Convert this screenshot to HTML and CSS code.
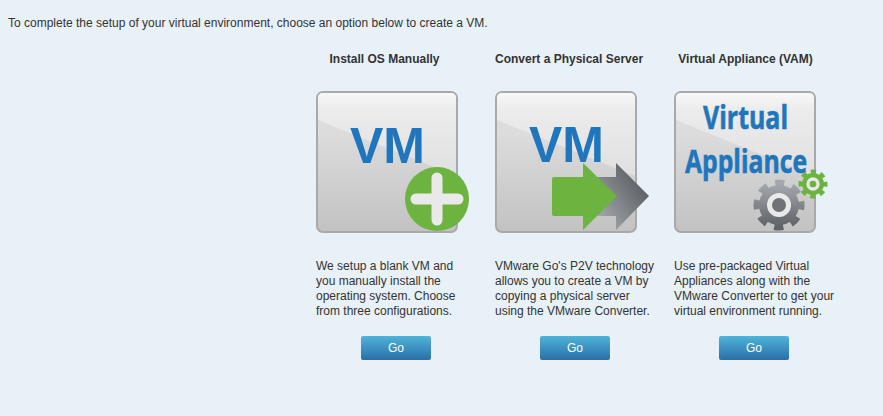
FILE: index.html
```html
<!DOCTYPE html>
<html lang="en">
<head>
  <meta charset="UTF-8" />
  <title>Create a VM</title>
  <meta name="viewport" content="width=device-width, initial-scale=1.0" />
  <link rel="stylesheet" href="styles.css">
</head>
<body>

<p class="intro">To complete the setup of your virtual environment, choose an option below to create a VM.</p>

<div class="options">
  <!-- Install OS -->
  <div class="option">
    <h3 class="option-title option-title-first">Install OS Manually</h3>
    <svg class="tile" viewBox="0 0 172 146" width="172" height="146">
      <defs>
        <linearGradient id="tileBg" x1="0" y1="0" x2="0" y2="1">
          <stop offset="0" stop-color="#dedede"/>
          <stop offset="0.3" stop-color="#dcdcdc"/>
          <stop offset="1" stop-color="#c2c2c2"/>
        </linearGradient>
        <linearGradient id="tileShine" x1="0" y1="0" x2="0" y2="1">
          <stop offset="0" stop-color="#f8f8f8"/>
          <stop offset="0.2" stop-color="#ececec"/>
          <stop offset="1" stop-color="#e0e0e0"/>
        </linearGradient>
        <linearGradient id="arrowGrey" x1="0" y1="1" x2="1" y2="0.2">
          <stop offset="0" stop-color="#b4b8bc"/>
          <stop offset="1" stop-color="#505359"/>
        </linearGradient>
        <linearGradient id="gearGrey" x1="0" y1="0" x2="0" y2="1">
          <stop offset="0" stop-color="#a4a8ae"/>
          <stop offset="1" stop-color="#606368"/>
        </linearGradient>
      </defs>
      <rect class="tile-box" x="1" y="1" width="140" height="140" rx="6" fill="url(#tileBg)"/>
      <path d="M2 7 Q2 2 7 2 H135 Q140 2 140 7 V85 L2 29 Z" fill="url(#tileShine)"/>
      <text class="tile-vm" x="34" y="72">VM</text>
      <circle cx="121" cy="108" r="32" fill="#6db33f"/>
      <path class="plus" d="M100 108 H142 M121 87 V129"/>
    </svg>
    <p class="option-text">We setup a blank VM and<br>you manually install the<br>operating system. Choose<br>from three configurations.</p>
    <a class="go" href="#">Go</a>
  </div>

  <!-- P2V -->
  <div class="option">
    <h3 class="option-title">Convert a Physical Server</h3>
    <svg class="tile" viewBox="0 0 172 146" width="172" height="146">
      <rect class="tile-box" x="1" y="1" width="140" height="140" rx="6" fill="url(#tileBg)"/>
      <path d="M2 7 Q2 2 7 2 H135 Q140 2 140 7 V85 L2 29 Z" fill="url(#tileShine)"/>
      <text class="tile-vm" x="34" y="71">VM</text>
      <path d="M96 86 H121 V72 L154 105 L121 139 V125 H96 Z" fill="url(#arrowGrey)"/>
      <path d="M59 86 H88 V72 L122 105 L88 139 V125 H59 Q57 125 57 123 V88 Q57 86 59 86 Z" fill="#6db33f"/>
    </svg>
    <p class="option-text">VMware Go's P2V technology<br>allows you to create a VM by<br>copying a physical server<br>using the VMware Converter.</p>
    <a class="go" href="#">Go</a>
  </div>

  <!-- Appliance -->
  <div class="option">
    <h3 class="option-title">Virtual Appliance (VAM)</h3>
    <svg class="tile" viewBox="0 0 172 146" width="172" height="146">
      <rect class="tile-box" x="1" y="1" width="140" height="140" rx="6" fill="url(#tileBg)"/>
      <path d="M2 7 Q2 2 7 2 H135 Q140 2 140 7 V85 L2 29 Z" fill="url(#tileShine)"/>
      <text class="tile-word" x="29" y="38" textLength="85" lengthAdjust="spacingAndGlyphs">Virtual</text>
      <text class="tile-word" x="11" y="82" textLength="122" lengthAdjust="spacingAndGlyphs">Appliance</text>
      <!-- big gear -->
      <circle cx="105" cy="114" r="20" fill="url(#gearGrey)"/>
      <circle cx="105" cy="114" r="21.5" fill="none" stroke="url(#gearGrey)" stroke-width="8" stroke-dasharray="9 7.89" stroke-dashoffset="4.5"/>
      <circle cx="105" cy="114" r="9.5" fill="#6f7277" stroke="#e9e9e9" stroke-width="5"/>
      <!-- small gear -->
      <circle cx="139" cy="93" r="11" fill="#6db33f"/>
      <circle cx="139" cy="93" r="12" fill="none" stroke="#6db33f" stroke-width="5" stroke-dasharray="5 4.42" stroke-dashoffset="2.5"/>
      <circle cx="139" cy="93" r="5" fill="#6db33f" stroke="#e9e9e9" stroke-width="3.3"/>
    </svg>
    <p class="option-text">Use pre-packaged Virtual<br>Appliances along with the<br>VMware Converter to get your<br>virtual environment running.</p>
    <a class="go" href="#">Go</a>
  </div>
</div>

</body>
</html>
```

FILE: styles.css
```css
body {
  font-family: 'Liberation Sans', Arial, sans-serif;
  font-size: 12px;
  line-height: 15px;
  margin: 0;
  padding: 16px 8px 0;
  background-color: #e8f0f8;
  color: #333;
}

.intro {
  margin: 0;
}

.options {
  display: flex;
  gap: 19px;
  margin-left: 308px;
  margin-top: 21px;
}

.option {
  width: 160px;
}

.option-title {
  width: 143px;
  margin: 0;
  font-size: 12px;
  font-weight: bold;
  text-align: center;
  white-space: nowrap;
}

.option-title-first {
  padding-right: 6px;
  box-sizing: border-box;
}

.tile {
  display: block;
  margin-top: 24px;
}

.tile-box {
  stroke: #a9a9a9;
  stroke-width: 2;
}

.tile-vm {
  font-family: 'Liberation Sans', Arial, sans-serif;
  font-size: 50px;
  font-weight: bold;
  fill: #1f76bc;
}

.tile-word {
  font-family: 'Open Sans', sans-serif;
  font-size: 32px;
  font-weight: bold;
  fill: #1f76bc;
  stroke: #1f76bc;
  stroke-width: 0.6;
}

.plus {
  fill: none;
  stroke: #e9e9e9;
  stroke-width: 11;
  stroke-linecap: round;
}

.option-text {
  margin: 22px 0 0;
  white-space: nowrap;
}

.go {
  display: block;
  width: 70px;
  height: 24px;
  margin: 17px auto 0;
  border-radius: 2px;
  background: linear-gradient(to bottom, #4fb4d8, #2a6fa9);
  color: #fff;
  font-size: 12px;
  line-height: 24px;
  text-align: center;
  text-decoration: none;
}
```
